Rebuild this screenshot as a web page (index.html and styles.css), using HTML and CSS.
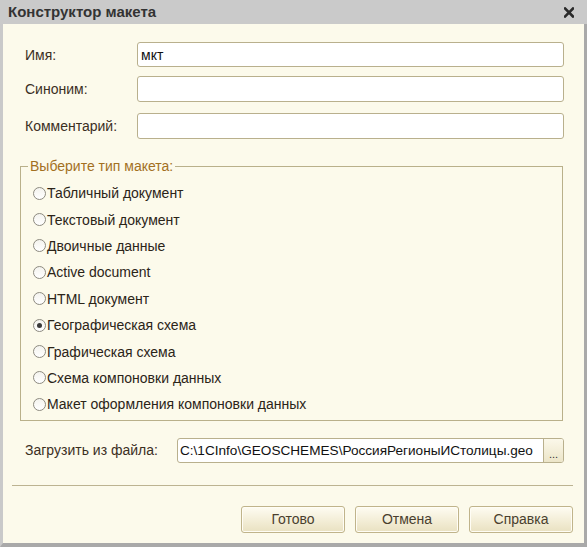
FILE: index.html
```html
<!DOCTYPE html>
<html lang="ru">
<head>
<meta charset="utf-8">
<title>Конструктор макета</title>
<link rel="stylesheet" href="styles.css">
</head>
<body>
<div class="window">
  <div class="titlebar">
    <span class="title">Конструктор макета</span>
    <svg class="close" width="10" height="11" viewBox="0 0 10 11"><path d="M1 1.5 L9 9.5 M9 1.5 L1 9.5" stroke="#2a2a2a" stroke-width="2.6" stroke-linecap="square"/></svg>
  </div>
  <div class="content">
    <div class="form">
      <div class="row"><label class="lbl">Имя:</label><div class="input">мкт</div></div>
      <div class="row r2"><label class="lbl">Синоним:</label><div class="input"></div></div>
      <div class="row r3"><label class="lbl">Комментарий:</label><div class="input"></div></div>
    </div>
    <fieldset class="group">
      <legend>Выберите тип макета:</legend>
      <div class="radios">
        <div class="radio"><span class="dot"></span>Табличный документ</div>
        <div class="radio"><span class="dot"></span>Текстовый документ</div>
        <div class="radio"><span class="dot"></span>Двоичные данные</div>
        <div class="radio"><span class="dot"></span>Active document</div>
        <div class="radio"><span class="dot"></span>HTML документ</div>
        <div class="radio"><span class="dot checked"></span>Географическая схема</div>
        <div class="radio"><span class="dot"></span>Графическая схема</div>
        <div class="radio"><span class="dot"></span>Схема компоновки данных</div>
        <div class="radio"><span class="dot"></span>Макет оформления компоновки данных</div>
      </div>
    </fieldset>
    <div class="filerow">
      <label class="lbl flbl">Загрузить из файла:</label>
      <div class="fileinput">
        <div class="path">C:\1CInfo\GEOSCHEMES\РоссияРегионыИСтолицы.geo</div>
        <div class="browse">...</div>
      </div>
    </div>
    <div class="sep"></div>
    <div class="buttons">
      <div class="btn">Готово</div>
      <div class="btn">Отмена</div>
      <div class="btn">Справка</div>
    </div>
  </div>
</div>
</body>
</html>
```
FILE: styles.css
```css
html, body {
  margin: 0;
  padding: 0;
  background: #fcfaeb;
}
body {
  font-family: "Liberation Sans", Arial, sans-serif;
  font-size: 14px;
}
.window {
  width: 581px;
  height: 543px;
  border-left: 3px solid #c9c9c9;
  border-right: 3px solid #a9a9a9;
  border-bottom: 4px solid #a9a9a9;
  display: flex;
  flex-direction: column;
  background: #fcfaeb;
}
.titlebar {
  flex: 0 0 24px;
  height: 24px;
  margin-left: -3px;
  margin-right: -3px;
  background: #cacaca;
  display: flex;
  align-items: center;
  justify-content: space-between;
  padding: 0 13px 0 8px;
}
.title {
  font-weight: bold;
  font-size: 15px;
  color: #333333;
  position: relative;
  top: -1px;
}
.close {
  display: block;
  position: relative;
  top: 0px;
}
.content {
  flex: 1;
  display: flex;
  flex-direction: column;
}
.form {
  padding: 18px 20px 0 22px;
}
.row {
  display: flex;
  align-items: center;
  height: 25px;
}
.r2 { margin-top: 9px; height: 26px; }
.r3 { margin-top: 11px; height: 26px; }
.lbl {
  width: 112px;
  color: #3b2f1f;
  font-size: 14px;
}
.input {
  flex: 1;
  height: 100%;
  box-sizing: border-box;
  background: #ffffff;
  border: 1px solid #b9b08d;
  border-radius: 3px;
  padding: 0 3px;
  display: flex;
  align-items: center;
  color: #111;
  font-size: 14px;
}
.group {
  margin: 20px 21px 0 17px;
  padding: 0 0 2px 0;
  border: 1px solid #b9b08a;
  min-width: 0;
}
.group legend {
  margin-left: 7px;
  padding: 0 2px;
  color: #a3701f;
  font-size: 14px;
  line-height: 15px;
}
.radios {
  padding: 6px 0 0 12px;
}
.radio {
  height: 26.4px;
  display: flex;
  align-items: center;
  color: #2b2418;
  font-size: 14px;
}
.dot {
  width: 13px;
  height: 13px;
  box-sizing: border-box;
  border: 1px solid #8d8a80;
  border-radius: 50%;
  background: linear-gradient(#f4f3ee, #ffffff);
  margin-right: 1px;
  display: flex;
  align-items: center;
  justify-content: center;
}
.dot.checked::after {
  content: "";
  width: 5px;
  height: 5px;
  border-radius: 50%;
  background: #3a3a3a;
}
.filerow {
  display: flex;
  align-items: center;
  margin: 17px 20px 0 22px;
  height: 25px;
}
.flbl {
  width: 152px;
}
.fileinput {
  flex: 1;
  height: 100%;
  display: flex;
  box-sizing: border-box;
  border: 1px solid #b9b08d;
  border-radius: 3px;
  background: #fff;
  overflow: hidden;
}
.path {
  flex: 1;
  display: flex;
  align-items: center;
  padding: 0 2px;
  color: #111;
  font-size: 13.6px;
  white-space: nowrap;
}
.browse {
  width: 20px;
  border-left: 1px solid #b9b08d;
  background: linear-gradient(#fbf8ea, #ece5c8);
  display: flex;
  align-items: flex-end;
  justify-content: center;
  padding-bottom: 4px;
  box-sizing: border-box;
  font-size: 11px;
  line-height: 8px;
  color: #333;
}
.sep {
  margin: 22px 11px 0 9px;
  height: 1px;
  background: #bcb391;
}
.buttons {
  display: flex;
  justify-content: flex-end;
  gap: 10px;
  margin: 20px 11px 0 0;
}
.btn {
  width: 104px;
  height: 27px;
  box-sizing: border-box;
  border: 1px solid #c0b48b;
  border-radius: 3px;
  background: linear-gradient(#fefcf2, #f2ecd4 60%, #e9e1c1);
  box-shadow: inset 0 0 0 1px #fffdf5;
  display: flex;
  align-items: center;
  justify-content: center;
  color: #4a3f2e;
  font-size: 14px;
}
```
